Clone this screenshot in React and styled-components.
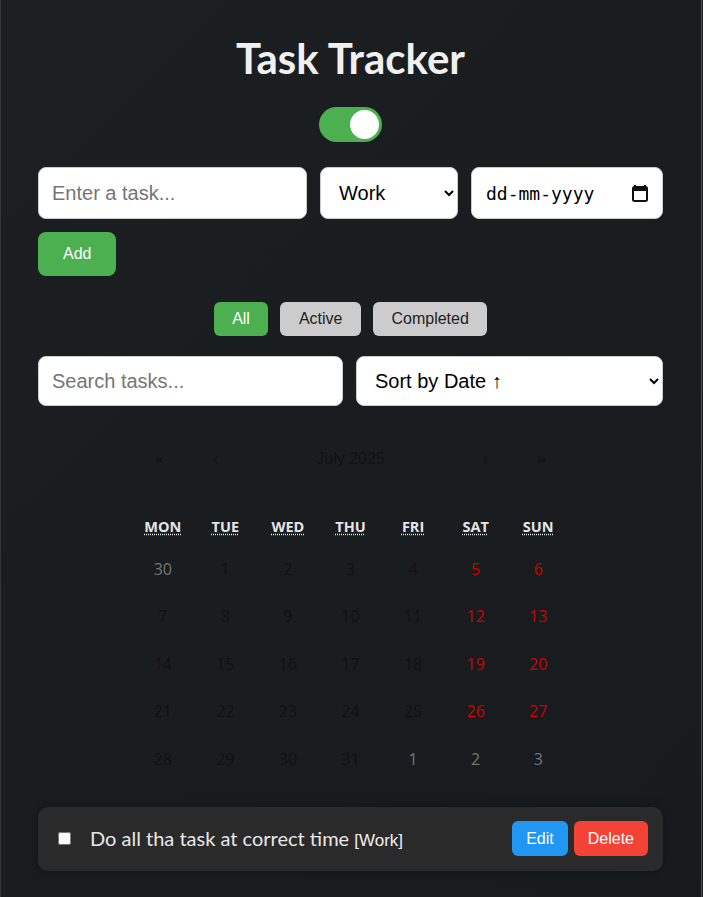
import React, { useState } from "react";
import styled, { createGlobalStyle } from "styled-components";

const GlobalStyle = createGlobalStyle`
  * { box-sizing: border-box; }
  html, body { margin: 0; padding: 0; }
  body {
    background: #191d20;
    font-family: "Liberation Sans", Arial, sans-serif;
  }
`;

const Page = styled.div`
  min-height: 897px;
  padding: 34px 40px 24px 38px;
  background: linear-gradient(135deg, #1b1f22 0%, #191d20 50%, #171b1d 100%);
  box-shadow: inset 1px 0 #30373a, inset -1px 0 #191d20, inset -2px 0 #3e5557;
`;

const Title = styled.h1`
  margin: 0;
  text-align: center;
  font-family: Lato, "Open Sans", sans-serif;
  font-weight: 700;
  font-size: 42px;
  line-height: 48px;
  color: #f0f0f0;
`;

const ToggleWrap = styled.div`
  display: flex;
  justify-content: center;
  margin-top: 25px;
`;

const Toggle = styled.button`
  position: relative;
  width: 63px;
  height: 35px;
  border: none;
  border-radius: 18px;
  background: ${(p) => (p.$on ? "#4caf50" : "#888")};
  cursor: pointer;
  padding: 0;

  &::after {
    content: "";
    position: absolute;
    top: 3px;
    left: ${(p) => (p.$on ? "31px" : "3px")};
    width: 29px;
    height: 29px;
    border-radius: 50%;
    background: #fff;
  }
`;

const Row = styled.div`
  display: flex;
  gap: ${(p) => p.$gap || 13}px;
  margin-top: ${(p) => p.$mt || 0}px;
  justify-content: ${(p) => (p.$center ? "center" : "flex-start")};
`;

const fieldBase = `
  border: 1px solid #ccc;
  border-radius: 8px;
  background: #fff;
  font-family: "Liberation Sans", Arial, sans-serif;
  font-size: 20px;
  color: #000;
  outline: none;
`;

const TextInput = styled.input`
  ${fieldBase}
  height: ${(p) => p.$h || 52}px;
  flex: 1;
  min-width: 0;
  padding: 0 13px;

  &::placeholder { color: #757575; }
`;

const Select = styled.select`
  ${fieldBase}
  height: ${(p) => p.$h || 52}px;
  width: ${(p) => (p.$w ? p.$w + "px" : "auto")};
  flex: ${(p) => (p.$w ? "none" : 1)};
  padding: 0 14px;
`;

const DateField = styled.div`
  ${fieldBase}
  height: 52px;
  width: 192px;
  display: flex;
  align-items: center;
  justify-content: space-between;
  padding: 0 14px;
  font-family: "DejaVu Sans Mono", "Liberation Mono", monospace;
  font-size: 18px;
`;

const Button = styled.button`
  border: none;
  border-radius: ${(p) => p.$r || 6}px;
  background: ${(p) => p.$bg};
  color: ${(p) => p.$fg || "#fff"};
  font-family: "Liberation Sans", Arial, sans-serif;
  font-size: 16px;
  height: ${(p) => p.$h || 34}px;
  padding: 0 ${(p) => p.$px || 18.5}px;
  cursor: pointer;
`;

const Calendar = styled.div`
  width: 438px;
  margin: 31px auto 0;
`;

const Nav = styled.div`
  display: grid;
  grid-template-columns: 56px 56px 1fr 56px 56px;
  height: 44px;
  align-items: center;
  text-align: center;
  color: #111;
  font-family: "Liberation Sans", Arial, sans-serif;
  font-size: 16px;
  margin-bottom: 22px;
`;

const NavBtn = styled.button`
  border: none;
  background: none;
  color: #111;
  font: inherit;
  height: 44px;
  cursor: pointer;
`;

const Grid = styled.div`
  display: grid;
  grid-template-columns: repeat(7, 1fr);
`;

const Weekday = styled.div`
  height: 42px;
  padding-top: 4px;
  display: flex;
  align-items: center;
  justify-content: center;
  font-family: "Open Sans", sans-serif;
  font-weight: 700;
  font-size: 14.5px;
  color: #e6e6e6;

  abbr {
    text-decoration: underline dotted;
    text-underline-offset: 2px;
  }
`;

const Day = styled.div`
  height: 47.5px;
  display: flex;
  align-items: center;
  justify-content: center;
  font-family: "Open Sans", sans-serif;
  font-size: 16px;
  color: ${(p) => (p.$other ? "#757575" : p.$weekend ? "#d10000" : "#111")};
`;

const TaskItem = styled.div`
  display: flex;
  align-items: center;
  height: 64px;
  margin-top: 24px;
  padding: 0 15px 0 20px;
  background: #2a2a2a;
  border-radius: 10px;
  box-shadow: 0 0 10px rgba(0, 0, 0, 0.35);
`;

const Check = styled.input`
  width: 13px;
  height: 13px;
  margin: 0 19px 0 0;
`;

const TaskText = styled.span`
  flex: 1;
  font-family: Lato, "Open Sans", sans-serif;
  font-size: 20px;
  color: #e8e8e8;

  small {
    font-family: "Liberation Sans", Arial, sans-serif;
    font-size: 17px;
    color: #f0f0f0;
  }
`;

const Actions = styled.div`
  display: flex;
  gap: 6px;
`;

const weekdays = ["MON", "TUE", "WED", "THU", "FRI", "SAT", "SUN"];

const buildDays = () => {
  const days = [{ d: 30, other: true }];
  for (let i = 1; i <= 31; i++) days.push({ d: i });
  [1, 2, 3].forEach((d) => days.push({ d, other: true }));
  return days;
};

export default function App() {
  const [dark, setDark] = useState(true);
  const days = buildDays();

  return (
    <Page>
      <GlobalStyle />
      <Title>Task Tracker</Title>
      <ToggleWrap>
        <Toggle $on={dark} onClick={() => setDark(!dark)} aria-label="toggle theme" />
      </ToggleWrap>

      <Row $mt={25}>
        <TextInput placeholder="Enter a task..." />
        <Select $w={138} defaultValue="Work">
          <option>Work</option>
          <option>Personal</option>
          <option>Other</option>
        </Select>
        <DateField>
          <span>dd-mm-yyyy</span>
          <svg width="16" height="18" viewBox="0 0 16 18">
            <rect x="2" y="1" width="2" height="3" fill="#111" />
            <rect x="12" y="1" width="2" height="3" fill="#111" />
            <rect x="1" y="3" width="14" height="14" rx="1.5" fill="none" stroke="#111" strokeWidth="2" />
            <rect x="1" y="3" width="14" height="4" fill="#111" />
          </svg>
        </DateField>
      </Row>

      <Row $mt={13}>
        <Button $bg="#4caf50" $h={44} $px={25} $r={8}>Add</Button>
      </Row>

      <Row $mt={26} $gap={12} $center>
        <Button $bg="#4caf50">All</Button>
        <Button $bg="#ccc" $fg="#222">Active</Button>
        <Button $bg="#ccc" $fg="#222">Completed</Button>
      </Row>

      <Row $mt={20}>
        <TextInput $h={50} placeholder="Search tasks..." />
        <Select $h={50} defaultValue="asc">
          <option value="asc">Sort by Date ↑</option>
          <option value="desc">Sort by Date ↓</option>
        </Select>
      </Row>

      <Calendar>
        <Nav>
          <NavBtn>«</NavBtn>
          <NavBtn>‹</NavBtn>
          <span>July 2025</span>
          <NavBtn>›</NavBtn>
          <NavBtn>»</NavBtn>
        </Nav>
        <Grid>
          {weekdays.map((w) => (
            <Weekday key={w}>
              <abbr title={w}>{w}</abbr>
            </Weekday>
          ))}
          {days.map((day, i) => (
            <Day key={i} $other={day.other} $weekend={i % 7 >= 5}>
              {day.d}
            </Day>
          ))}
        </Grid>
      </Calendar>

      <TaskItem>
        <Check type="checkbox" />
        <TaskText>
          Do all tha task at correct time <small>[Work]</small>
        </TaskText>
        <Actions>
          <Button $bg="#2196f3" $h={35} $px={14}>Edit</Button>
          <Button $bg="#f44336" $h={35} $px={14}>Delete</Button>
        </Actions>
      </TaskItem>
    </Page>
  );
}
